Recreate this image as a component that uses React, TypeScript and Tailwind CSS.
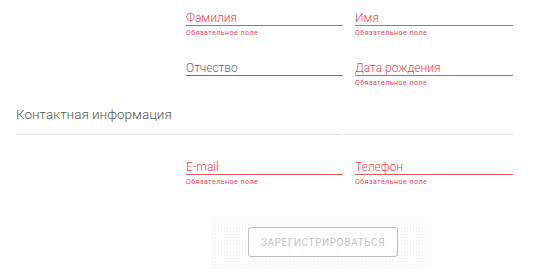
import React from "react";

type FieldProps = {
  label: string;
  required?: boolean;
};

function Field({ label, required = true }: FieldProps) {
  return (
    <div className="flex flex-col">
      <div
        className={`text-[12px] leading-[14px] font-light border-b ${
          required ? "text-[#e5434d] border-[#dc5a62]" : "text-[#666] border-[#777]"
        }`}
      >
        {label}
      </div>
      <div className="h-[11px] pt-[3px] text-[7px] leading-[8px] tracking-[0.5px] text-[#e5434d]">
        {required ? "Обязательное поле" : ""}
      </div>
    </div>
  );
}

export default function App() {
  return (
    <div className="w-[545px] h-[278px] bg-white pl-4 pr-8 pt-[11px] font-['Roboto',sans-serif] overflow-hidden">
      <div className="grid grid-cols-[158px_157px_158px] gap-x-3 gap-y-[24px]">
        <div />
        <Field label="Фамилия" />
        <Field label="Имя" />
        <div />
        <Field label="Отчество" required={false} />
        <Field label="Дата рождения" />
      </div>

      <div className="mt-[19px] flex">
        <div className="w-[326px] border-b border-[#e2e2e2] pb-[12px] text-[13.5px] leading-[16px] font-light text-[#555]">
          Контактная информация
        </div>
        <div className="ml-[2px] flex-1 border-b border-[#e2e2e2]" />
      </div>

      <div className="mt-[25px] grid grid-cols-[158px_157px_158px] gap-x-3">
        <div />
        <Field label="E-mail" />
        <Field label="Телефон" />
      </div>

      <div className="mt-[32px] ml-[195px] w-[219px] h-[52px] flex items-start pt-[9px] pl-[37px] bg-[radial-gradient(#ececec_0.8px,transparent_0.9px)] bg-[size:3px_3px]">
        <button
          type="button"
          className="w-[150px] h-[30px] rounded-[3px] border border-[#bdbdbd] bg-white text-[10px] tracking-[0.6px] text-[#c2c2c2] uppercase"
        >
          Зарегистрироваться
        </button>
      </div>
    </div>
  );
}
